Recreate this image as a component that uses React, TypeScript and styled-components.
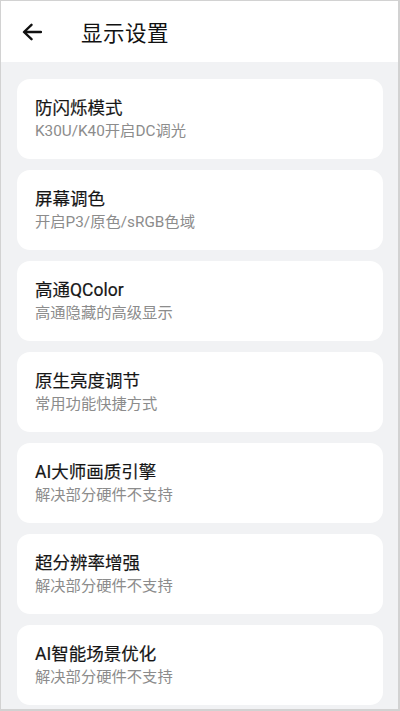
import React from "react";
import styled, { createGlobalStyle } from "styled-components";

const Global = createGlobalStyle`
  html, body { margin: 0; padding: 0; }
  body { font-family: Roboto, "Noto Sans CJK SC", "Noto Sans", sans-serif; background: #fff; }
  * { box-sizing: border-box; }
`;

const Screen = styled.div`
  width: 400px;
  height: 711px;
  border: 1px solid #d2d2d2;
  border-right-width: 2px;
  border-bottom-width: 2px;
  background: #f1f2f4;
  display: flex;
  flex-direction: column;
  overflow: hidden;
`;

const Header = styled.header`
  height: 61px;
  flex-shrink: 0;
  background: #fff;
  display: flex;
  align-items: center;
  padding-left: 20px;
  gap: 38px;
`;

const BackButton = styled.div`
  width: 22px;
  height: 22px;
  display: flex;
  align-items: center;
  justify-content: center;
  color: #111;
`;

const Title = styled.h1`
  margin: 0;
  font-size: 21.5px;
  font-weight: 400;
  color: #111;
  letter-spacing: 0.5px;
`;

const List = styled.div`
  display: flex;
  flex-direction: column;
  gap: 11px;
  padding: 17px 15px 0 16px;
`;

const Card = styled.div`
  background: #fff;
  border-radius: 13px;
  height: 80px;
  flex-shrink: 0;
  padding: 0 18px;
  display: flex;
  flex-direction: column;
  justify-content: center;
`;

const CardTitle = styled.div`
  font-size: 17.5px;
  line-height: 22px;
  color: #161616;
  font-weight: 400;
  -webkit-text-stroke: 0.2px #161616;
`;

const CardSub = styled.div`
  font-size: 15.3px;
  line-height: 20px;
  color: #8c8c8c;
  margin-top: 2px;
`;

const items = [
  { t: "防闪烁模式", s: "K30U/K40开启DC调光" },
  { t: "屏幕调色", s: "开启P3/原色/sRGB色域" },
  { t: "高通QColor", s: "高通隐藏的高级显示" },
  { t: "原生亮度调节", s: "常用功能快捷方式" },
  { t: "AI大师画质引擎", s: "解决部分硬件不支持" },
  { t: "超分辨率增强", s: "解决部分硬件不支持" },
  { t: "AI智能场景优化", s: "解决部分硬件不支持" },
];

export default function App() {
  return (
    <>
      <Global />
      <Screen>
        <Header>
          <BackButton>
            <svg width="20" height="18" viewBox="0 0 20 18" fill="none">
              <path d="M19 9H2.5M9.5 1.8L2 9l7.5 7.2" stroke="currentColor" strokeWidth="2.4" strokeLinecap="round" strokeLinejoin="round" />
            </svg>
          </BackButton>
          <Title>显示设置</Title>
        </Header>
        <List>
          {items.map((it) => (
            <Card key={it.t}>
              <CardTitle>{it.t}</CardTitle>
              <CardSub>{it.s}</CardSub>
            </Card>
          ))}
        </List>
      </Screen>
    </>
  );
}
